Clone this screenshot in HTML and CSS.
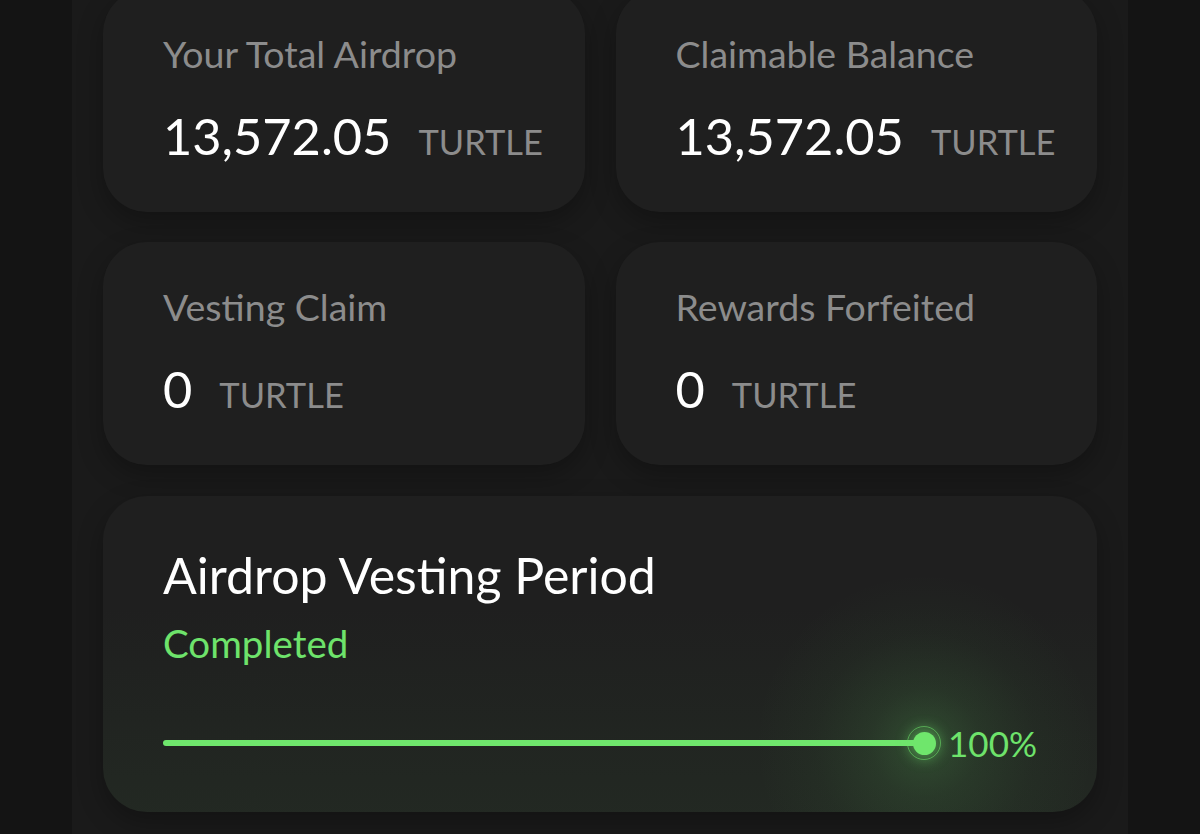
FILE: index.html
```html
<!DOCTYPE html>
<html lang="en">
<head>
<meta charset="utf-8">
<title>Airdrop</title>
<link rel="stylesheet" href="styles.css">
</head>
<body>
<main class="column">
  <div class="grid">
    <section class="card stat">
      <p class="label">Your Total Airdrop</p>
      <p class="value"><span class="num">13,572.05</span><span class="unit">TURTLE</span></p>
    </section>
    <section class="card stat">
      <p class="label">Claimable Balance</p>
      <p class="value"><span class="num">13,572.05</span><span class="unit">TURTLE</span></p>
    </section>
    <section class="card stat">
      <p class="label">Vesting Claim</p>
      <p class="value"><span class="num">0</span><span class="unit">TURTLE</span></p>
    </section>
    <section class="card stat">
      <p class="label">Rewards Forfeited</p>
      <p class="value"><span class="num">0</span><span class="unit">TURTLE</span></p>
    </section>
    <section class="card vesting">
      <h2 class="title">Airdrop Vesting Period</h2>
      <p class="status">Completed</p>
      <div class="progress">
        <div class="track">
          <div class="fill" style="width:100%"></div>
          <span class="knob"><span class="dot"></span></span>
        </div>
        <span class="pct">100%</span>
      </div>
    </section>
  </div>
</main>
</body>
</html>
```
FILE: styles.css
```css
* { box-sizing: border-box; }
html, body { margin: 0; padding: 0; }
body {
  background: #141414;
  font-family: "Lato", "Inter", "Liberation Sans", sans-serif;
  height: 834px;
  overflow: hidden;
}
.column {
  display: flow-root;
  width: 1056px;
  margin-left: 72px;
  min-height: 834px;
  background: #1a1a1a;
  padding: 0 31px;
}
.grid {
  display: grid;
  grid-template-columns: minmax(0, 1fr) minmax(0, 1fr);
  column-gap: 31px;
  row-gap: 30px;
  margin-top: -11px;
}
.card {
  background: #1f1f1f;
  border-radius: 44px;
  box-shadow: 0 10px 26px rgba(0, 0, 0, 0.28);
}
.stat {
  height: 223px;
  padding: 43px 60px 0;
}
.label {
  margin: 0;
  color: #8c8c8c;
  font-size: 37.5px;
  line-height: 44px;
}
.value {
  margin: 28px 0 0;
  display: flex;
  align-items: baseline;
  gap: 27px;
  line-height: 64px;
  white-space: nowrap;
}
.num {
  color: #ffffff;
  font-size: 50.5px;
}
.unit {
  color: #8c8c8c;
  font-size: 34.5px;
}
.vesting {
  grid-column: 1 / -1;
  height: 316px;
  margin-top: 1px;
  padding: 49px 60px 0;
  background:
    radial-gradient(circle at 822px 247px, rgba(110, 230, 110, 0.2) 0, rgba(110, 230, 110, 0.09) 55px, rgba(110, 230, 110, 0.03) 110px, rgba(110, 230, 110, 0) 170px),
    linear-gradient(to bottom, rgba(60, 110, 60, 0) 35%, rgba(60, 110, 60, 0.12) 100%),
    #1f1f1f;
}
.title {
  margin: 0;
  color: #ffffff;
  font-weight: 400;
  font-size: 50px;
  line-height: 60px;
}
.status {
  margin: 16px 0 0;
  color: #6ee36b;
  font-size: 38.5px;
  line-height: 44px;
}
.progress {
  margin-top: 58px;
  display: flex;
  align-items: center;
  gap: 24px;
  height: 40px;
}
.track {
  position: relative;
  width: 762px;
  height: 6px;
}
.fill {
  height: 6px;
  border-radius: 3px;
  background: #6fe66c;
}
.knob {
  position: absolute;
  right: -17px;
  top: -14px;
  width: 34px;
  height: 34px;
  border-radius: 50%;
  border: 1.5px solid rgba(111, 230, 108, 0.55);
  display: flex;
  align-items: center;
  justify-content: center;
}
.dot {
  width: 23px;
  height: 23px;
  border-radius: 50%;
  background: #6fe66c;
  box-shadow: 0 0 14px 4px rgba(111, 230, 108, 0.45);
}
.pct {
  color: #6ee36b;
  font-size: 35px;
  line-height: 40px;
}
```
